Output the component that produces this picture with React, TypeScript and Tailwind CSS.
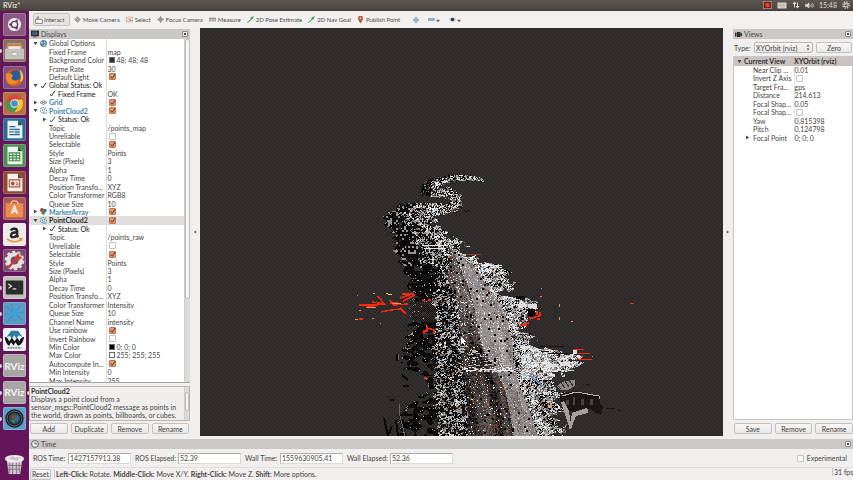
import React from "react";

/* ---------- small shared icons ---------- */

type Kind = "globe" | "tick" | "greentick" | "eye" | "points" | "marker" | "none";

function Twisty({ open, size = "size-[5px]" }: { open: boolean; size?: string }) {
  return (
    <svg viewBox="0 0 10 10" className={`${size} shrink-0`} fill="#4a4a4a">
      {open ? <path d="M1 2h8L5 8.5z" /> : <path d="M2 1l6.5 4L2 9z" />}
    </svg>
  );
}

function RowIcon({ kind }: { kind: Kind }) {
  const cls = "size-[7px] shrink-0";
  if (kind === "globe")
    return (
      <svg viewBox="0 0 14 14" className={cls}>
        <circle cx="7" cy="7" r="6.3" fill="#4f7ea8" />
        <path d="M2 4c3-2 4 0 4 2s-2 2-3 1zM8 2l4 3-2 2-2-2zM7 9l4-1-1 4-3 1z" fill="#c5d8e6" />
        <circle cx="7" cy="7" r="6.3" fill="none" stroke="#3c5f80" />
      </svg>
    );
  if (kind === "tick" || kind === "greentick")
    return (
      <svg viewBox="0 0 14 14" className={cls} fill="none" strokeWidth="2">
        <path d="M2 8l3 4L12 1.5" stroke={kind === "tick" ? "#2b2b2b" : "#2f6b3c"} />
      </svg>
    );
  if (kind === "eye")
    return (
      <svg viewBox="0 0 14 14" className={cls} fill="none" stroke="#55585a" strokeWidth="1.4">
        <path d="M0 7l7-4 7 4-7 4zM3.5 5l7 4M10.5 5l-7 4" />
      </svg>
    );
  if (kind === "points")
    return (
      <svg viewBox="0 0 14 14" className={cls} fill="#4a86b2">
        {[[2, 3], [6, 1], [11, 2], [1, 8], [5, 6], [9, 5], [13, 7], [4, 11], [8, 10], [12, 12], [8, 13]].map(([x, y]) => (
          <circle key={`${x}-${y}`} cx={x} cy={y} r="1.4" />
        ))}
      </svg>
    );
  if (kind === "marker")
    return (
      <svg viewBox="0 0 14 14" className={cls}>
        <circle cx="4" cy="4" r="4" fill="#c63a2c" />
        <rect x="7" y="2" width="6" height="6" fill="#2e6fa5" />
        <path d="M3 7l8 1-3 6-5-2z" fill="#2f8d46" />
      </svg>
    );
  return null;
}

function Tick({ label, checked, size = "size-[7px]" }: { label: string; checked: boolean; size?: string }) {
  return (
    <span className={`relative block ${size}`}>
      <input
        type="checkbox"
        aria-label={label}
        defaultChecked={checked}
        className="peer block size-full appearance-none rounded-[1px] border border-[#c4c2bf] bg-white checked:border-[#b5795c] checked:bg-[#ee9468]"
      />
      <svg
        viewBox="0 0 14 14"
        className="pointer-events-none absolute inset-0 hidden size-full peer-checked:block"
        fill="none"
        stroke="#5d3322"
        strokeWidth="2"
      >
        <path d="M3.5 7l3 3.5L12.5 2" />
      </svg>
    </span>
  );
}

function PanelHeader({ icon, title }: { icon: React.ReactNode; title: string }) {
  return (
    <header className="flex h-[10px] shrink-0 items-center gap-[2px] bg-[#c9c8c7] pr-[2px] pl-[2px] text-[#4a4846]">
      {icon}
      <h2 className="flex-1">{title}</h2>
      <button
        aria-label={`Close ${title}`}
        className="flex size-[6px] items-center justify-center rounded-[1px] border border-[#8c8a88] bg-[#eeedec]"
      >
        <span className="block size-[2px] bg-[#4a4a4a]" />
      </button>
    </header>
  );
}

function PushButton({ children, className = "" }: { children: React.ReactNode; className?: string }) {
  return (
    <button
      className={`h-[11px] rounded-[2px] border border-[#c3c1be] bg-linear-to-b from-[#f8f7f6] to-[#e9e7e5] text-center leading-[8px] ${className}`}
    >
      {children}
    </button>
  );
}

/* ---------- property trees ---------- */

type Row = {
  name: string;
  value?: string;
  check?: boolean;
  swatch?: string;
  level?: 0 | 1 | 2;
  open?: boolean;
  icon?: Kind;
  tone?: "blue" | "selected" | "dark";
};

const displayRows: Row[] = [
  { name: "Global Options", level: 0, open: true, icon: "globe" },
  { name: "Fixed Frame", value: "map" },
  { name: "Background Color", value: "48; 48; 48", swatch: "#303030" },
  { name: "Frame Rate", value: "30" },
  { name: "Default Light", check: true },
  { name: "Global Status: Ok", level: 0, open: true, icon: "tick", tone: "dark" },
  { name: "Fixed Frame", value: "OK", level: 2, icon: "tick", tone: "dark" },
  { name: "Grid", check: true, level: 0, open: false, icon: "eye", tone: "blue" },
  { name: "PointCloud2", check: true, level: 0, open: true, icon: "points", tone: "blue" },
  { name: "Status: Ok", level: 2, open: false, icon: "greentick", tone: "dark" },
  { name: "Topic", value: "/points_map" },
  { name: "Unreliable", check: false },
  { name: "Selectable", check: true },
  { name: "Style", value: "Points" },
  { name: "Size (Pixels)", value: "3" },
  { name: "Alpha", value: "1" },
  { name: "Decay Time", value: "0" },
  { name: "Position Transfo...", value: "XYZ" },
  { name: "Color Transformer", value: "RGB8" },
  { name: "Queue Size", value: "10" },
  { name: "MarkerArray", check: true, level: 0, open: false, icon: "marker", tone: "blue" },
  { name: "PointCloud2", check: true, level: 0, open: true, icon: "points", tone: "selected" },
  { name: "Status: Ok", level: 2, open: false, icon: "tick", tone: "dark" },
  { name: "Topic", value: "/points_raw" },
  { name: "Unreliable", check: false },
  { name: "Selectable", check: true },
  { name: "Style", value: "Points" },
  { name: "Size (Pixels)", value: "3" },
  { name: "Alpha", value: "1" },
  { name: "Decay Time", value: "0" },
  { name: "Position Transfo...", value: "XYZ" },
  { name: "Color Transformer", value: "Intensity" },
  { name: "Queue Size", value: "10" },
  { name: "Channel Name", value: "intensity" },
  { name: "Use rainbow", check: true },
  { name: "Invert Rainbow", check: false },
  { name: "Min Color", value: "0; 0; 0", swatch: "#000000" },
  { name: "Max Color", value: "255; 255; 255", swatch: "#ffffff" },
  { name: "Autocompute In...", check: true },
  { name: "Min Intensity", value: "0" },
  { name: "Max Intensity", value: "255" },
];

const toneClass = {
  blue: "font-bold text-[#4286ad]",
  selected: "font-bold text-[#2e2c2a]",
  dark: "text-[#141414]",
  plain: "text-[#454341]",
};

function DisplayTree() {
  return (
    <table className="h-[346px] w-full table-fixed border-collapse leading-[8px]">
      <colgroup>
        <col className="w-[77px]" />
        <col />
      </colgroup>
      <tbody>
        {displayRows.map((r, i) => (
          <tr key={i} className={r.tone === "selected" ? "bg-[#dfdedd]" : ""}>
            <td className="border-r border-[#dcdbda] p-0 align-middle">
              <div
                className={`flex h-[8px] items-center whitespace-nowrap ${toneClass[r.tone ?? "plain"]} ${
                  r.level === 0 ? "gap-[2px] pl-[4px]" : r.level === 2 ? "gap-[2px] pl-[13px]" : "pl-[20px]"
                }`}
              >
                {r.level !== undefined &&
                  (r.open === undefined ? <span className="w-[5px]" /> : <Twisty open={r.open} />)}
                <RowIcon kind={r.icon ?? "none"} />
                <span>{r.name}</span>
              </div>
            </td>
            <td className="p-0 pl-px align-middle">
              <div className="flex h-[8px] items-center gap-[2px] whitespace-nowrap text-[#454341]">
                {r.check !== undefined && (
                  <span className="pl-px">
                    <Tick label={r.name} checked={r.check} />
                  </span>
                )}
                {r.swatch && (
                  <span className="ml-px block size-[6px] border border-[#6b6b6b]" style={{ backgroundColor: r.swatch }} />
                )}
                {r.value}
              </div>
            </td>
          </tr>
        ))}
      </tbody>
    </table>
  );
}

const viewRows: Row[] = [
  { name: "Near Clip ...", value: "0.01" },
  { name: "Invert Z Axis", check: false },
  { name: "Target Fra...", value: "gps" },
  { name: "Distance", value: "214.613" },
  { name: "Focal Shap...", value: "0.05" },
  { name: "Focal Shap...", check: false },
  { name: "Yaw", value: "0.815398" },
  { name: "Pitch", value: "0.124798" },
  { name: "Focal Point", value: "0; 0; 0", open: false },
];

function ViewTree() {
  return (
    <table className="h-[85px] w-full table-fixed border-collapse leading-[8px]">
      <colgroup>
        <col className="w-[60px]" />
        <col />
      </colgroup>
      <tbody>
        <tr className="bg-[#c9c2bf] font-bold text-[#35302e]">
          <td className="p-0">
            <div className="flex h-[8px] items-center gap-[2px] pl-[3px] whitespace-nowrap">
              <Twisty open />
              Current View
            </div>
          </td>
          <td className="p-0 whitespace-nowrap">XYOrbit (rviz)</td>
        </tr>
        {viewRows.map((r, i) => (
          <tr key={i}>
            <td className="border-r border-[#e6e5e4] p-0">
              <div className="flex h-[8px] items-center gap-[3px] pl-[11px] whitespace-nowrap">
                {r.open === undefined ? <span className="w-[5px]" /> : <Twisty open={r.open} />}
                {r.name}
              </div>
            </td>
            <td className="p-0 whitespace-nowrap">
              {r.check !== undefined ? (
                <span className="block pl-px">
                  <Tick label={r.name} checked={r.check} />
                </span>
              ) : (
                r.value
              )}
            </td>
          </tr>
        ))}
      </tbody>
    </table>
  );
}

/* ---------- point cloud ---------- */

function hash(x: number, y: number, s: number) {
  let h = Math.imul(x, 374761393) ^ Math.imul(y, 668265263) ^ Math.imul(s, 1442695041);
  h = Math.imul(h ^ (h >>> 13), 1274126177);
  h = Math.imul(h ^ (h >>> 15), 2246822519);
  return ((h ^ (h >>> 16)) >>> 0) / 4294967296;
}

function noise(x: number, y: number, s: number) {
  const xi = Math.floor(x);
  const yi = Math.floor(y);
  const fx = x - xi;
  const fy = y - yi;
  const top = hash(xi, yi, s) * (1 - fx) + hash(xi + 1, yi, s) * fx;
  const bottom = hash(xi, yi + 1, s) * (1 - fx) + hash(xi + 1, yi + 1, s) * fx;
  return top * (1 - fy) + bottom * fy;
}

// y, left edge, end of the black fringe, road left, start of the pale lane, road right, right edge
const profile = [
  [203, 402, 416, 440, 440, 440, 444],
  [207, 395, 408, 440, 440, 440, 450],
  [212, 390, 404, 436, 436, 436, 444],
  [216, 383, 402, 430, 430, 430, 436],
  [222, 382, 405, 432, 432, 432, 434],
  [228, 390, 408, 434, 434, 434, 441],
  [236, 395, 415, 440, 440, 440, 454],
  [245, 396, 417, 447, 448, 449, 464],
  [253, 396, 418, 449, 453, 458, 474],
  [261, 399, 422, 449, 457, 468, 484],
  [266, 403, 437, 448, 459, 474, 504],
  [276, 408, 438, 446, 463, 481, 508],
  [285, 410, 436, 449, 467, 487, 511],
  [294, 411, 435, 453, 470, 492, 508],
  [301, 410, 435, 457, 472, 498, 535],
  [309, 408, 434, 458, 474, 503, 537],
  [316, 409, 434, 458, 475, 506, 532],
  [325, 411, 434, 458, 477, 508, 530],
  [334, 408, 434, 459, 479, 510, 532],
  [342, 406, 434, 459, 481, 512, 536],
  [349, 404, 433, 460, 483, 513, 552],
  [355, 403, 433, 460, 486, 513, 577],
  [362, 404, 433, 461, 490, 513, 578],
  [370, 408, 433, 462, 496, 514, 568],
  [376, 424, 434, 463, 498, 516, 561],
  [384, 426, 434, 464, 502, 519, 560],
  [392, 424, 434, 465, 505, 522, 561],
  [402, 414, 435, 466, 507, 526, 562],
  [412, 402, 436, 467, 509, 530, 564],
  [424, 399, 436, 467, 511, 534, 565],
  [437, 398, 437, 468, 513, 538, 562],
];

const shades = ["#080606", "#171312", "#3b3634", "#5a5452", "#787270", "#989392", "#b8b5b4", "#e8e8e8", "#8fb8d6", "#774836"];

function edges(y: number) {
  let i = 0;
  while (i < profile.length - 2 && profile[i + 1][0] <= y) i++;
  const a = profile[i];
  const b = profile[i + 1];
  const t = (y - a[0]) / (b[0] - a[0]);
  return a.map((v, k) => v + (b[k] - v) * t);
}

function speckle(x: number, y: number, light: number) {
  // neighbouring cells share a tone so that dots read as small clumps
  const fine = hash(x, y, 1);
  const pair = hash((x + (y & 1)) >> 1, y >> 1, 2);
  const r = hash(x, y, 14) > 0.5 ? fine : pair;
  const v = r + light;
  if (hash(x >> 1, y, 3) > 0.975) return 8;
  if (v < 0.22) return 0;
  if (v < 0.32) return 1;
  if (v < 0.42) return 3;
  if (v < 0.52) return 4;
  if (v < 0.66) return 5;
  if (v < 0.86) return 6;
  return 7;
}

function shadeAt(x: number, y: number) {
  const [, l, b, rl, rm, rr, r] = edges(y);
  const left = l + (noise(y / 2, 3, 5) - 0.5) * 8;
  const right = r + (noise(y / 2, 9, 6) - 0.5) * 12;
  if (x < left || x > right) return -1;
  const fringe = b + (noise(y / 3, 1, 7) - 0.5) * 9;
  if (x < fringe) {
    const gap = noise(x / 5, y / 3, 8);
    const limit = y > 375 ? 0.52 : y > 325 ? 0.66 : 0.8;
    if (gap > limit) return -1;
    const h = hash(x, y, 9);
    if (x < left + 3 && h > 0.85) return 5;
    if (y < 268 && hash(x >> 1, y >> 1, 15) > 0.86) return 5;
    if (y > 300 && y < 322 && (x + y) % 2 === 0) return 2;
    if (h > 0.97) return 6;
    return h > 0.75 ? 1 : 0;
  }
  if (x > rl && x < rr) {
    const pale = x > rm;
    const t = pale ? 0.5 + ((x - rm) / (rr - rm)) * 0.5 : ((x - rl) / (rm - rl)) * 0.5;
    const streak = noise(t * 16, y / 50, 10);
    const h = hash(x, y, 11);
    if (y > 366 && y < 372 && hash(x >> 1, y >> 1, 16) > 0.35) return h > 0.5 ? 7 : 5;
    if (y > 345 && y < 366 && hash(x >> 2, y, 17) > 0.86) return 6;
    const scatter = y < 366 ? 0.07 : 0.035;
    if (hash(x >> 1, y >> 1, 18) < scatter) return 0;
    if (h > 1 - scatter) return 7;
    let base = streak * 0.42 + h * 0.3 + (pale ? 0.36 : 0.02);
    if (y < 345) base += pale ? 0.06 : 0.08;
    if (hash(x, y >> 1, 12) > (pale ? 0.98 : 0.92)) return 9;
    if (base < 0.24) return 1;
    if (base < 0.42) return 2;
    if (base < 0.54) return 3;
    if (base < 0.68) return 4;
    if (base < 0.92) return 5;
    return 6;
  }
  const patch = noise(x / 6, y / 5, 13);
  let bright = 0.0;
  if (y < 255) bright = x > (b + r) / 2 - 4 ? 0.12 : -0.08;
  else if (y < 300) bright = x > rr ? 0.2 : -0.04;
  else if (x > 520 && y > 345 && y < 380) bright = 0.3;
  else if (x > rr) bright = 0.1;
  else bright = -0.1;
  if (x > right - 10 && patch > 0.58) return -1;
  if (x <= rl && hash(x >> 1, y >> 1, 19) > 0.8) return 1;
  return speckle(x, y, bright + (patch - 0.5) * 0.5);
}

function buildCloud() {
  const out: string[] = shades.map(() => "");
  for (let y = 203; y < 437; y++) {
    let x = 376;
    while (x < 600) {
      const s = shadeAt(x, y);
      let n = 1;
      while (x + n < 600 && shadeAt(x + n, y) === s) n++;
      if (s >= 0) out[s] += `M${x} ${y}h${n}v1h-${n}z`;
      x += n;
    }
  }
  // winding far end of the street
  const bend = [
    [483, 180, 1], [474, 178, 2], [462, 177, 3], [450, 178, 3], [438, 181, 4], [428, 185, 5], [425, 190, 5], [434, 192, 5],
    [446, 191, 5], [455, 196, 5], [457, 202, 5], [452, 207, 5], [442, 209, 5], [430, 210, 6], [418, 212, 6],
  ];
  for (let i = 0; i < bend.length - 1; i++) {
    const [x0, y0, w0] = bend[i];
    const [x1, y1, w1] = bend[i + 1];
    for (let k = 0; k < 150; k++) {
      const t = k / 150;
      const w = w0 + (w1 - w0) * t;
      const dx = (hash(k, i, 20) - 0.5) * 2 * w;
      const dy = (hash(k, i, 21) - 0.5) * 2 * w;
      const x = Math.round(x0 + (x1 - x0) * t + dx);
      const y = Math.round(y0 + (y1 - y0) * t + dy);
      const dark = dx + dy < -w * 0.4 || (i > 3 && i < 7 && x < 431);
      out[speckle(x, y, dark ? -0.45 : 0.14)] += `M${x} ${y}h1v1h-1z`;
    }
  }
  return out;
}

const cloud = buildCloud();

function PointCloud() {
  return (
    <svg
      viewBox="200 28 523 408"
      preserveAspectRatio="xMidYMid slice"
      className="size-full"
      shapeRendering="crispEdges"
      role="img"
      aria-label="3D point cloud"
    >
      <defs>
        <pattern id="grain" width="4" height="4" patternUnits="userSpaceOnUse">
          <rect width="4" height="4" fill="#302c2c" />
          <path d="M0 0h1v1h-1zM2 2h1v1h-1z" fill="#393535" />
          <path d="M2 0h1v1h-1zM0 2h1v1h-1z" fill="#292525" />
        </pattern>
      </defs>
      <rect x="200" y="28" width="523" height="408" fill="url(#grain)" />
      {cloud.map((d, i) => (
        <path key={i} d={d} fill={shades[i]} />
      ))}
      {/* house and lot at the lower right */}
      <path d="M560 394l16-3 24 5v8l3 3-2 8-5-2-6-4-16 3-10-3-4-8z" fill="#1a1615" />
      <path d="M562 396l14-4 23 4v3" fill="none" stroke="#b5b2b0" />
      <path d="M566 400h3v5h-3zM573 397h2v8h-2zM581 399h3v6h-3zM590 399h3v6h-3z" fill="#4a4441" />
      <path d="M561 402l3-1 5 10 2 14-2 2-4-13zM572 413l14-5 2 1v4l-12 3-5 13h-2z" fill="#a3a09e" />
      <path d="M556 386l9-5 10-1v6l-7 4h-8z" fill="#8a8684" />
      <path d="M557 385l4 4M561 383l4 5M565 381l4 6M569 380l4 6" stroke="#302c2c" />
      <path d="M540 346h25M541 351h8M548 353h24M606 408l8 1M618 410h3M586 384h3M467 210h3M465 211h2" stroke="#171312" />
      <path d="M518 304h9v3h-9zM528 304h9v4h-9zM548 364h10v3h-10zM560 362h10v4h-10zM573 350h4v4h-4z" fill="#dedede" />
      <path d="M528 309h7v8h-7zM516 296h9v3h-9z" fill="#0b0808" />
      <path d="M535 380l7 5M531 377l4 3" stroke="#5f93bd" strokeWidth="1.500" />
      <path d="M481 369h15M498 370h14M467 370h9M422 245h25M424 248h20M484 265h18M490 267h12" stroke="#e6e6e6" />
      {/* crops and poles at the lower left */}
      <path
        d="M384 418l4 18M389 434l3-8M396 420l2 16M390 400h4M397 354v7M402 375l6 5M403 386h6M398 415h14M402 425l18-6"
        fill="none"
        stroke="#0b0808"
        strokeWidth="2"
      />
      <path d="M399 404l1 12 5 20M398 354l1 6M405 349l6-1" fill="none" stroke="#6c6765" />
      {/* live scan returns */}
      <g fill="none" stroke="#f22a10" strokeWidth="1.500">
        <path d="M359 305h17l9-1M366 307l12-2M378 296l7 9M372 302l13 2M390 303h8M381 312l10-2 9-1 6 4M390 300l3 5M400 298l12-4M393 305l15-1M403 301l12-6M402 294h12M359 319h4M400 308l6 6" />
        <path d="M427 326v5h-3v3M427 328l7 2v3M422 300l3 1M428 300h3M424 378h3" />
        <path d="M520 325h7M524 324l5-1M537 311v4M540 312v4M534 317l6-1M537 319h3M530 318h4" />
        <path d="M573 349h11M578 353h12M578 359h14M630 303h4" strokeWidth="1" />
        <path d="M467 254h14" stroke="#8f3a2a" strokeWidth="1" />
      </g>
      <path
        d="M357 295h1M373 293h2M392 303h9M367 307h9M359 310h2M355 319h3M372 318h2M380 323h1M559 304v3M559 317v3M571 321h2M541 288h1M540 296h2M592 356h1M548 405h6M551 403v6"
        stroke="#e8935c"
        fill="none"
      />
      <path d="M388 294h4M386 293h2" stroke="#e8dc4a" />
      <path d="M461 337v7l2-2 1 3 1-1-1-2h2z" fill="#f4f4f4" />
    </svg>
  );
}

/* ---------- launcher ---------- */

const launcherItems: { name: string; tile: string; art: React.ReactNode }[] = [
  {
    name: "Dash",
    tile: "bg-[#8a5a80]",
    art: (
      <>
        <circle cx="12" cy="12" r="7.5" fill="#f3eef2" />
        <circle cx="12" cy="12" r="3.6" fill="none" stroke="#6b3a63" strokeWidth="1.6" />
        <circle cx="7.2" cy="12" r="1.4" fill="#6b3a63" />
        <circle cx="14.5" cy="7.8" r="1.4" fill="#6b3a63" />
        <circle cx="14.5" cy="16.2" r="1.4" fill="#6b3a63" />
      </>
    ),
  },
  {
    name: "Files",
    tile: "bg-[#86705f]",
    art: (
      <>
        <path d="M4 3h16l2 8H2z" fill="#a5947f" />
        <path d="M4 5h16v3H4z" fill="#d9773f" />
        <path d="M5 7h14v4H5z" fill="#f4efe9" />
        <rect x="1" y="10" width="22" height="12" rx="1" fill="#c4c1be" />
        <rect x="9" y="14" width="6" height="4" rx="1" fill="#f4f3f2" stroke="#8d8a87" strokeWidth=".7" />
      </>
    ),
  },
  {
    name: "Firefox",
    tile: "bg-[#7e5280]",
    art: (
      <>
        <circle cx="12" cy="12" r="10" fill="#e2571c" />
        <circle cx="13" cy="10" r="6.500" fill="#2b5c9e" />
        <path d="M2.500 7c2 1 4-1 7 2 2 2-1 2-1 4 2 3 6 3 9 1-2 6-9 8-13 4-2-3-3-7-2-11z" fill="#f08a24" />
        <path d="M18 3.500c4 3 5 8 3 12l-3 2c2-4 1-9 0-14z" fill="#f6c536" />
      </>
    ),
  },
  {
    name: "Chrome",
    tile: "bg-[#b5713f]",
    art: (
      <>
        <circle cx="12" cy="12" r="10" fill="#d9453a" />
        <path d="M3.300 7A10 10 0 0 0 12 22l4.500-8H9z" fill="#3d9a56" />
        <path d="M12 22A10 10 0 0 0 20.700 7.500H13l3.500 7z" fill="#f2c534" />
        <circle cx="12" cy="12" r="4.800" fill="#f4f4f4" />
        <circle cx="12" cy="12" r="3.800" fill="#4b8bd0" />
      </>
    ),
  },
  {
    name: "Writer",
    tile: "bg-[#2f6a93]",
    art: (
      <>
        <path d="M4 2h12l5 5v15H4z" fill="#eef3f6" />
        <path d="M16 2l5 5h-5z" fill="#164a70" />
        <path d="M6 8h7v1.500H6zM6 11h12v1.500H6zM6 14h5v1.500H6zM6 17h12v1.500H6z" fill="#2f6a93" />
        <path d="M12 13.500h6v3h-6z" fill="#5a9bc4" />
      </>
    ),
  },
  {
    name: "Calc",
    tile: "bg-[#4f8f53]",
    art: (
      <>
        <path d="M4 2h12l5 5v15H4z" fill="#eef5ee" />
        <path d="M16 2l5 5h-5z" fill="#215f27" />
        <path d="M6 9h12v9H6zM6 12h12M6 15h12M10 9v9M14 9v9" fill="none" stroke="#3f8f45" strokeWidth="1.300" />
      </>
    ),
  },
  {
    name: "Impress",
    tile: "bg-[#8d4c31]",
    art: (
      <>
        <path d="M4 2h12l5 5v15H4z" fill="#f5efeb" />
        <path d="M16 2l5 5h-5z" fill="#6b3520" />
        <path d="M6 9h12v8H6z" fill="none" stroke="#a5573a" strokeWidth="1.300" />
        <circle cx="10" cy="13" r="2.200" fill="#a5573a" />
        <path d="M13.500 12h3v1h-3zM13.500 14h3v1h-3z" fill="#a5573a" />
      </>
    ),
  },
  {
    name: "Software",
    tile: "bg-[#a85a55]",
    art: (
      <>
        <path d="M2 6h20v16H2z" fill="#ee8b4d" />
        <path d="M8 7c0-5 8-5 8 0" fill="none" stroke="#f6cdb0" strokeWidth="1.300" />
        <path d="M8.500 18L12 9.500l3.500 8.500M9.800 15.500h4.400" fill="none" stroke="#fff" strokeWidth="1.800" />
      </>
    ),
  },
  {
    name: "Amazon",
    tile: "bg-[#ecebea]",
    art: (
      <>
        <path d="M8 7.500c1-3 7-3 7 .8V13.500l1.300 1.500M15 9.500c-4 0-7 1-7 3.500s5 3 7-.5" fill="none" stroke="#252525" strokeWidth="2.800" />
        <path d="M3.500 17c5 4.500 12 4.500 16.500.3M17 16.500h3.500l-.6 3" fill="none" stroke="#ef9336" strokeWidth="1.700" />
      </>
    ),
  },
  {
    name: "Settings",
    tile: "bg-[#7c4a6e]",
    art: (
      <>
        <circle cx="12" cy="12" r="7" fill="none" stroke="#e4e2e1" strokeWidth="5" />
        <circle cx="12" cy="12" r="10" fill="none" stroke="#e4e2e1" strokeWidth="2.500" strokeDasharray="3.500 2.800" />
        <path d="M3 19l9-7 1-5 5-4-1 4 4 1-4 4-4 1-7 8z" fill="#c8402f" />
      </>
    ),
  },
  {
    name: "Terminal",
    tile: "bg-[#c3c1bf]",
    art: (
      <>
        <rect x="2" y="4" width="20" height="16" rx="1" fill="#2c2d2b" />
        <path d="M5 8l3.500 2.500L5 13M10 13.500h4" fill="none" stroke="#e8e8e8" strokeWidth="1.400" />
      </>
    ),
  },
  {
    name: "Viewer",
    tile: "bg-[#5a9cc4]",
    art: (
      <>
        <path d="M12 12L2 3M12 12L9 2M12 12l7-9M12 12l11-2M12 12l9 8M12 12v10M12 12l-8 9M12 12L1 13" stroke="#3f8fc0" strokeWidth="1.200" />
        <path d="M12 5l3 5 5 3-5 1-3 5-2-5-6-2 6-2z" fill="#3aa5e2" />
      </>
    ),
  },
  {
    name: "Autoware",
    tile: "bg-[#eef2f4]",
    art: (
      <>
        <path d="M3 9l5-7h8l5 7-4-2-3 4-2-4-3 4-2-3z" fill="#2f7ca3" />
        <path d="M1 9c3 0 4 3 5 5l3-4 3 4 3-4 3 4c0-3 3-5 5-5-1 6-4 10-7 10l-3-4-2 4-3-4-2 4c-3-1-5-6-5-10z" fill="#161616" />
        <path d="M4 21.500h16" stroke="#565656" strokeWidth="1.500" strokeDasharray="2 1" />
      </>
    ),
  },
  { name: "RViz 1", tile: "bg-[#a8a6a5]", art: null },
  { name: "RViz 2", tile: "bg-[#a8a6a5]", art: null },
  {
    name: "Recorder",
    tile: "bg-[#5b9fcc]",
    art: (
      <>
        <circle cx="12" cy="12" r="10.500" fill="#1c1c1e" />
        <circle cx="12" cy="12" r="8.500" fill="none" stroke="#707578" />
        <circle cx="12" cy="12" r="6.500" fill="#2b4e58" />
        <path d="M12 8l5 1-1 7-4-2z" fill="#34699b" />
        <path d="M8 9l4-2 1 4-3 2z" fill="#a03b30" />
        <path d="M8 14l3-1 2 3-2 1z" fill="#4e8a56" />
      </>
    ),
  },
];

const running = ["Files", "Chrome", "Terminal", "Viewer", "Autoware", "RViz 1", "RViz 2", "Recorder"];

function Launcher() {
  return (
    <nav aria-label="Launcher" className="flex w-[29px] shrink-0 flex-col items-center bg-[#65165a] pt-[2px] pb-[3px]">
      <ul className="flex w-full flex-1 flex-col items-center justify-between">
        {launcherItems.map((it) => (
          <li key={it.name} className="relative flex w-full justify-center">
            {running.includes(it.name) && (
              <span className="absolute top-[10px] left-0 h-[4px] w-[2px] rounded-r bg-[#e4d9e2]" />
            )}
            {it.name === "RViz 2" && (
              <span className="absolute top-[10px] right-0 h-[4px] w-[2px] rounded-l bg-[#e4d9e2]" />
            )}
            <button
              aria-label={it.name}
              className={`flex size-[23px] items-center justify-center overflow-hidden rounded-[2px] border border-[#ffffff33] ${it.tile}`}
            >
              {it.art ? (
                <svg viewBox="0 0 24 24" className="size-full">
                  {it.art}
                </svg>
              ) : (
                <span className="text-[10px] leading-none font-bold text-[#f2f2f2]">RViz</span>
              )}
            </button>
          </li>
        ))}
      </ul>
      <button aria-label="Trash" className="mt-[22px] h-[25px] w-[23px]">
        <svg viewBox="0 0 24 24" className="size-full">
          <path d="M4 8h16l-2 14H6z" fill="#cfc9cf" />
          <path d="M7 10v11M10 10v12M14 10v12M17 10v11M5 13h14M5 17h13" stroke="#8d7089" />
          <ellipse cx="12" cy="6" rx="10" ry="4" fill="#efecef" />
          <path d="M5 6l5-3 3 2 6-1-4 4-5-1z" fill="#c9c2c9" />
        </svg>
      </button>
    </nav>
  );
}

/* ---------- toolbar ---------- */

const tools: { label: string; art: React.ReactNode }[] = [
  {
    label: "Move Camera",
    art: <path d="M7 1l3 3H8.500v2H10V4.500L13 7l-3 3V8.500H8.500V10H10L7 13 4 10h1.500V8H4v2L1 7l3-3v2h1.500V4H4z" fill="#a9a6a3" stroke="#6f6d6b" strokeWidth=".6" />,
  },
  {
    label: "Select",
    art: (
      <>
        <rect x="1" y="2" width="12" height="10" fill="#f0d5c0" stroke="#8b7c72" strokeDasharray="2 1" />
        <path d="M6 5l6 5H8z" fill="#c06a44" />
      </>
    ),
  },
  {
    label: "Focus Camera",
    art: (
      <g fill="none" stroke="#8a8886" strokeWidth="1.500">
        <circle cx="7" cy="7" r="4" fill="#b9b6b3" />
        <path d="M7 0v14M0 7h14" />
      </g>
    ),
  },
  {
    label: "Measure",
    art: (
      <>
        <rect x="0" y="4" width="14" height="6" fill="#d5cbc8" stroke="#6b5f5c" />
        <path d="M3 4v3M6 4v3M9 4v3M12 4v3" stroke="#6b5f5c" />
      </>
    ),
  },
  { label: "2D Pose Estimate", art: <path d="M1 13L9 5 7 4l6-3-3 6-1-1-7 7z" fill="#2fa84f" stroke="#1f8c3c" /> },
  { label: "2D Nav Goal", art: <path d="M1 13L9 5 7 4l6-3-3 6-1-1-7 7z" fill="#2fa84f" stroke="#1f8c3c" /> },
  {
    label: "Publish Point",
    art: (
      <>
        <path d="M7 14C4 9 2.500 7 2.500 4.500a4.500 4.500 0 0 1 9 0C11.500 7 10 9 7 14z" fill="#b5532f" stroke="#7a3318" strokeWidth=".8" />
        <circle cx="7" cy="4.500" r="1.800" fill="#f0c9a8" />
      </>
    ),
  },
];

function Toolbar() {
  return (
    <div role="toolbar" className="flex h-[17px] shrink-0 items-center bg-[#f1f0ef] pl-[4px] text-[6px] leading-[8px] text-[#4b4947]">
      <button className="mr-[4px] flex h-[13px] w-[37px] items-center gap-px rounded-[2px] border border-[#c3c1bf] bg-[#e6e4e3] pl-px whitespace-nowrap">
        <svg viewBox="0 0 14 14" className="size-[8px]" fill="#f7f7f7" stroke="#3c3c3c">
          <path d="M1 13V6l2-1 1 2V1.500h2V6h6l1 1v6z" />
        </svg>
        Interact
      </button>
      <div className="flex items-center gap-[6px]">
        {tools.map((t) => (
          <button key={t.label} className="flex items-center gap-[2px] whitespace-nowrap">
            <svg viewBox="0 0 14 14" className="size-[7px]">
              {t.art}
            </svg>
            {t.label}
          </button>
        ))}
      </div>
      <div className="ml-[13px] flex items-center gap-[9px]">
        <button aria-label="Add tool">
          <svg viewBox="0 0 14 14" className="block size-[6px]">
            <path d="M5 1h4v4h4v4H9v4H5V9H1V5h4z" fill="#8db4d2" stroke="#5b88ab" />
          </svg>
        </button>
        <button aria-label="Remove tool" className="flex items-center gap-px">
          <svg viewBox="0 0 14 14" className="size-[7px]">
            <rect x="1" y="5" width="12" height="4" fill="#8fb0c8" stroke="#66879f" />
          </svg>
          <svg viewBox="0 0 10 10" className="mt-[2px] size-[4px]" fill="#6b5b58">
            <path d="M0 2h10L5 8z" />
          </svg>
        </button>
        <button aria-label="Tool visibility" className="flex items-center gap-px">
          <svg viewBox="0 0 14 14" className="size-[7px]">
            <path d="M0 7c3-6 11-6 14 0-3 6-11 6-14 0z" fill="#b9c7d0" />
            <circle cx="7" cy="7" r="3.500" fill="#2f3b45" />
          </svg>
          <svg viewBox="0 0 10 10" className="mt-[2px] size-[4px]" fill="#6b5b58">
            <path d="M0 2h10L5 8z" />
          </svg>
        </button>
      </div>
    </div>
  );
}

function TitleBar() {
  return (
    <div className="flex h-[11px] shrink-0 items-center justify-between border-b border-[#4a3a38] bg-linear-to-b from-[#5c584f] to-[#4c4441] pr-[3px] pl-[3px] leading-[8px] text-[#dfdbd2]">
      <h1 className="font-bold">RViz*</h1>
      <div className="flex items-center gap-[5px]">
        <svg viewBox="0 0 18 16" className="h-[8px] w-[9px]">
          <rect x=".5" y=".5" width="17" height="15" fill="#7a1e17" stroke="#cfc8c0" />
          <circle cx="9" cy="8" r="4.500" fill="#d8452f" />
        </svg>
        <svg viewBox="0 0 20 14" className="h-[7px] w-[10px]">
          <rect x="1" y="1" width="18" height="12" fill="#dfdbd2" />
          <path d="M3 4h14M3 7h14M5 10h10" stroke="#6b665e" strokeDasharray="2 1" />
        </svg>
        <svg viewBox="0 0 16 14" className="h-[8px] w-[8px]" fill="#dfdbd2">
          <path d="M5 0l4 5H6v7H4V5H1zM11 14L7 9h3V2h2v7h3z" />
        </svg>
        <svg viewBox="0 0 18 14" className="h-[7px] w-[9px]" fill="none" stroke="#dfdbd2" strokeWidth="1.300">
          <path d="M1 5h3l4-3v10L4 9H1z" fill="#dfdbd2" />
          <path d="M10 5q2 2 0 4M12.500 3.500q3 3.500 0 7M15 2q4 5 0 10" />
        </svg>
        <time>15:48</time>
        <svg viewBox="0 0 16 16" className="size-[8px]" fill="none" stroke="#dfdbd2">
          <circle cx="8" cy="8" r="4" strokeWidth="2" />
          <circle cx="8" cy="8" r="6.500" strokeWidth="2.500" strokeDasharray="2.500 2.600" />
          <path d="M8 4v4" strokeWidth="1.500" />
        </svg>
      </div>
    </div>
  );
}

/* ---------- bottom time panel ---------- */

const timeFields = [
  { id: "ros-time", label: "ROS Time:", value: "1427157913.38", width: "w-[31px]" },
  { id: "ros-elapsed", label: "ROS Elapsed:", value: "52.39", width: "w-[39px]" },
  { id: "wall-time", label: "Wall Time:", value: "1559630905.41", width: "w-[31px]" },
  { id: "wall-elapsed", label: "Wall Elapsed:", value: "52.36", width: "w-[39px]" },
];

function TimePanel() {
  return (
    <section className="shrink-0 pt-[3px]">
      <PanelHeader
        title="Time"
        icon={
          <svg viewBox="0 0 14 14" className="size-[8px]" fill="#f4f4f4" stroke="#4a4a4a" strokeWidth="1.500">
            <circle cx="7" cy="7" r="6" />
            <path d="M7 3.500V7h3.500" fill="none" />
          </svg>
        }
      />
      <div className="flex h-[18px] items-center gap-[4px] pr-[6px] pl-[4px]">
        {timeFields.map((f) => (
          <React.Fragment key={f.id}>
            <label htmlFor={f.id} className={`${f.width} shrink-0 whitespace-nowrap`}>
              {f.label}
            </label>
            <input
              id={f.id}
              readOnly
              defaultValue={f.value}
              className="h-[11px] w-[63px] border border-[#dcdad8] border-t-[#aeaba8] border-l-[#b5b3b0] bg-white pl-px leading-[8px] outline-none"
            />
          </React.Fragment>
        ))}
        <label className="ml-auto flex items-center gap-[3px]">
          <Tick label="Experimental" checked={false} />
          Experimental
        </label>
      </div>
      <footer className="flex h-[13px] items-center gap-[3px] border-t border-[#e0dedc] pl-px">
        <PushButton className="w-[21px]">Reset</PushButton>
        <p className="flex-1 border-l border-[#c9c7c5] pl-px whitespace-nowrap">
          <b>Left-Click:</b> Rotate. <b>Middle-Click:</b> Move X/Y. <b>Right-Click:</b> Move Z. <b>Shift</b>: More options.
        </p>
        <output className="mb-[4px] w-[21px] border-l border-[#c3c1bf] pl-px whitespace-nowrap">31 fps</output>
      </footer>
    </section>
  );
}

function Splitter({ dir }: { dir: "left" | "right" }) {
  return (
    <button aria-label={`Collapse ${dir} panel`} className="flex w-[10px] shrink-0 items-center justify-center bg-[#f0efee]">
      <svg viewBox="0 0 10 10" className="size-[4px]" fill="#5c5a58">
        {dir === "left" ? <path d="M8 1v8L2 5z" /> : <path d="M2 1v8l6-4z" />}
      </svg>
    </button>
  );
}

export default function App() {
  return (
    <div className="flex h-screen flex-col overflow-hidden bg-[#f0efee] font-['Lato',sans-serif] text-[7px] leading-[8px] text-[#454341]">
      <TitleBar />
      <div className="flex min-h-0 flex-1">
        <Launcher />
        <main className="flex min-w-0 flex-1 flex-col">
          <Toolbar />
          <div className="flex min-h-0 flex-1">
            <section className="flex w-[161px] shrink-0 flex-col pt-px">
              <PanelHeader
                title="Displays"
                icon={
                  <svg viewBox="0 0 14 14" className="size-[8px]">
                    <rect x="0" y="1" width="14" height="10" fill="#27303a" />
                    <rect x="2" y="3" width="8" height="6" fill="#3f5f7f" />
                    <path d="M4 11h6v2H4z" fill="#555" />
                    <path d="M9 3l3 3-3 3z" fill="#b54a3c" />
                  </svg>
                }
              />
              <div className="flex min-h-0 flex-1 border-b border-[#a9a7a5] bg-white">
                <div className="min-w-0 flex-1 overflow-hidden">
                  <DisplayTree />
                </div>
                <div className="flex w-[6px] flex-col border-l border-[#cfcdcb] bg-[#dddbd9]">
                  <div className="h-[260px] rounded-[2px] border border-[#bdbbb9] bg-[#f6f5f4]" />
                </div>
              </div>
              <div className="mt-[3px] flex h-[35px] shrink-0 overflow-hidden border border-[#b9b7b5] bg-[#efeeed]">
                <div className="flex-1 pl-px">
                  <h3 className="font-bold text-[#2f2d2b]">PointCloud2</h3>
                  <p className="whitespace-nowrap">
                    Displays a point cloud from a
                    <br />
                    sensor_msgs::PointCloud2 message as points in
                    <br />
                    the world, drawn as points, billboards, or cubes.
                  </p>
                </div>
                <div className="w-[5px] border-l border-[#cfcdcb] bg-[#dddbd9] pt-[5px]">
                  <div className="h-[19px] rounded-[2px] border border-[#bdbbb9] bg-[#f6f5f4]" />
                </div>
              </div>
              <div className="flex shrink-0 gap-[3px] py-[2px] pr-px pl-px">
                {["Add", "Duplicate", "Remove", "Rename"].map((b) => (
                  <PushButton key={b} className="flex-1">
                    {b}
                  </PushButton>
                ))}
              </div>
            </section>
            <Splitter dir="left" />
            <div className="min-w-0 flex-1 overflow-hidden bg-[#302c2c]">
              <PointCloud />
            </div>
            <Splitter dir="right" />
            <aside className="flex w-[120px] shrink-0 flex-col pt-px">
              <PanelHeader
                title="Views"
                icon={
                  <svg viewBox="0 0 14 10" className="h-[5px] w-[7px]" fill="#2f2f2f">
                    <path d="M0 1h3v8H0zM4 0h7v10H4zM11 4l3-3v8l-3-3z" />
                  </svg>
                }
              />
              <div className="flex items-center gap-[3px] py-[3px] pr-px pl-px">
                <label htmlFor="view-type" className="w-[17px]">
                  Type:
                </label>
                <span className="relative w-[59px]">
                  <select
                    id="view-type"
                    className="block h-[11px] w-full appearance-none rounded-[2px] border border-[#b9b7b4] bg-linear-to-b from-[#f8f7f6] to-[#e9e7e5] pl-px leading-[8px]"
                  >
                    <option>XYOrbit (rviz)</option>
                  </select>
                  <svg viewBox="0 0 8 14" className="pointer-events-none absolute top-[2px] right-[3px] h-[7px] w-[4px]" fill="#5c5a58">
                    <path d="M1 5l3-4 3 4zM1 9h6l-3 4z" />
                  </svg>
                </span>
                <PushButton className="flex-1">Zero</PushButton>
              </div>
              <div className="flex-1 border border-[#c9c7c5] bg-white">
                <ViewTree />
              </div>
              <div className="flex shrink-0 gap-[3px] pt-[3px] pb-[2px] pl-px">
                {["Save", "Remove", "Rename"].map((b) => (
                  <PushButton key={b} className="flex-1">
                    {b}
                  </PushButton>
                ))}
              </div>
            </aside>
          </div>
          <TimePanel />
        </main>
      </div>
    </div>
  );
}
